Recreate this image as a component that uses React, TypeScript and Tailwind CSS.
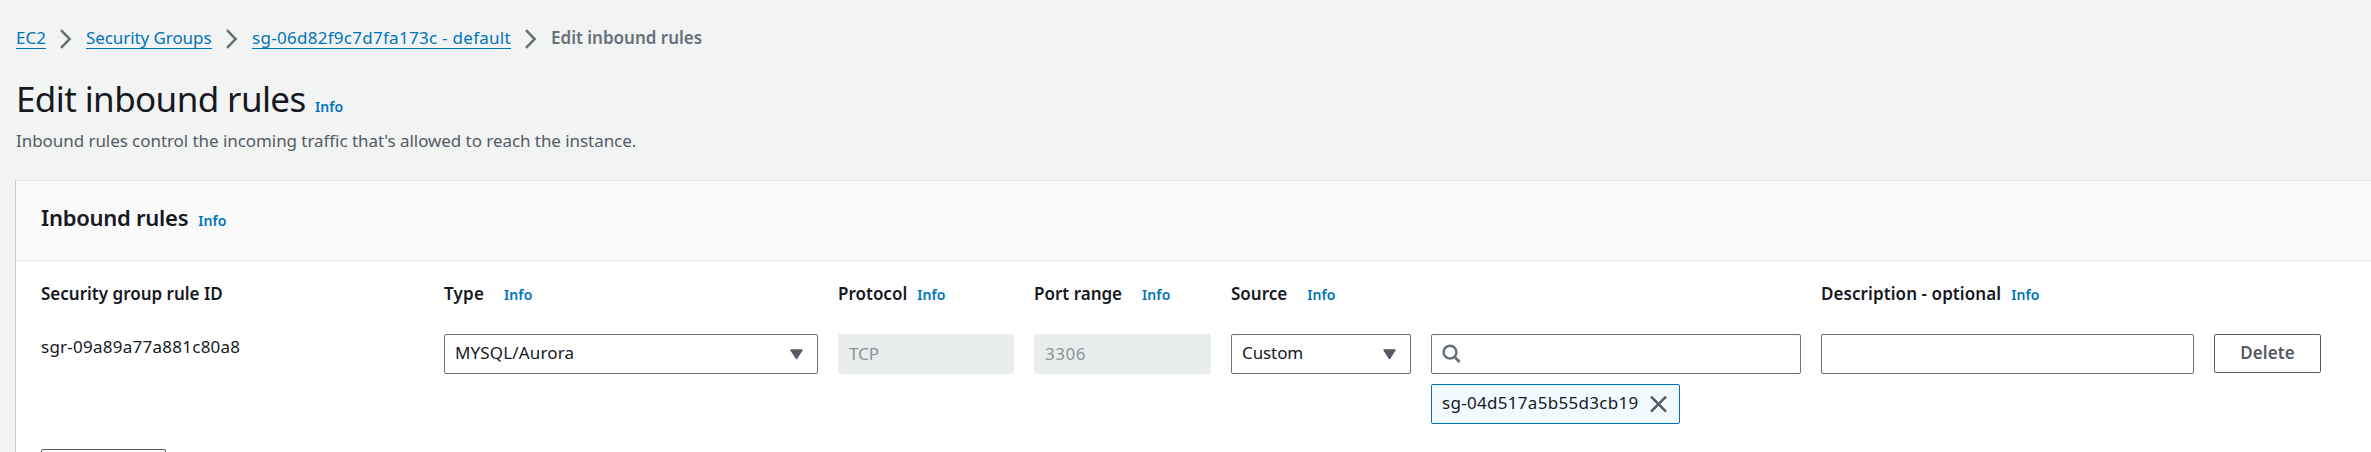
import type { ReactNode } from "react";

function Info() {
  return (
    <a className="w-[30px] whitespace-nowrap text-[14px] font-semibold leading-5 tracking-[0.1px] text-[#0073bb]">
      Info
    </a>
  );
}

function Crumb({ children, className = "" }: { children: ReactNode; className?: string }) {
  return (
    <a className={`h-6 shrink-0 whitespace-nowrap border-b border-[#0073bb] leading-[26px] text-[#0073bb] ${className}`}>
      {children}
    </a>
  );
}

function Chevron() {
  return (
    <svg className="ml-[14px] mt-1 h-5 w-3 shrink-0" viewBox="0 0 12 20" fill="none" stroke="#687078" strokeWidth="2.5">
      <path d="M1 1.2 L9.7 10 L1 18.8" />
    </svg>
  );
}

function Caret() {
  return (
    <svg className="h-[11px] w-[13px] shrink-0" viewBox="0 0 13 11">
      <path d="M1 1 H12 L6.5 9.5 Z" fill="#545b64" stroke="#545b64" strokeWidth="1.4" strokeLinejoin="round" />
    </svg>
  );
}

function Select({ children }: { children: ReactNode }) {
  return (
    <div className="flex h-10 items-center justify-between rounded-[2px] border border-[#687078] bg-white pl-[10px] pr-[14px]">
      {children}
      <Caret />
    </div>
  );
}

function Disabled({ children }: { children: ReactNode }) {
  return <div className="h-10 rounded-[2px] bg-[#eaeded] pl-[11px] pt-px leading-[38px] text-[#879596]">{children}</div>;
}

function Heading({ children, gap, spacing = "" }: { children: ReactNode; gap: string; spacing?: string }) {
  return (
    <div className={`flex h-6 items-baseline whitespace-nowrap font-semibold leading-6 ${gap}`}>
      <span className={spacing}>{children}</span>
      <Info />
    </div>
  );
}

const columns = "grid grid-cols-[383px_374px_176px_177px_180px_370px_373px_107px] gap-x-5";

export default function App() {
  return (
    <div className="h-[452px] w-[2371px] overflow-hidden bg-[#f2f3f3] font-['Noto_Sans',sans-serif] text-[17px] text-[#16191f]">
      <nav className="flex h-[49px] items-start pl-4 pt-[25px]">
        <Crumb className="w-[30px]">EC2</Crumb>
        <Chevron />
        <Crumb className="ml-[14px] w-[126px] tracking-[-0.08px]">Security Groups</Crumb>
        <Chevron />
        <Crumb className="ml-[14px] w-[259px] tracking-[0.28px]">sg-06d82f9c7d7fa173c - default</Crumb>
        <Chevron />
        <span className="ml-[14px] whitespace-nowrap font-semibold leading-[26px] text-[#687078]">Edit inbound rules</span>
      </nav>

      <header className="px-4 pt-[26px]">
        <div className="flex h-12 items-baseline">
          <h1 className="w-[299px] whitespace-nowrap text-[35px] font-normal leading-[48px] tracking-[-0.61px]">Edit inbound rules</h1>
          <Info />
        </div>
        <p className="mt-[6px] whitespace-nowrap leading-6 tracking-[-0.06px] text-[#545b64]">
          Inbound rules control the incoming traffic that&#39;s allowed to reach the instance.
        </p>
      </header>

      <main className="ml-[15px] mt-[27px] h-[272px] border-l border-t border-l-[#c3c8c8] border-t-[#e4e8e8] bg-white">
        <div className="flex h-20 items-baseline gap-[10px] border-b border-[#e4e8e8] bg-[#fafafa] pl-[25px] pt-5">
          <h2 className="whitespace-nowrap text-[22px] font-semibold leading-8 tracking-[-0.26px]">Inbound rules</h2>
          <Info />
        </div>

        <div className={`${columns} pl-[25px] pt-[21px]`}>
          <div className="whitespace-nowrap font-semibold leading-6">Security group rule ID</div>
          <Heading gap="gap-[20px]" spacing="tracking-[0.2px]">Type</Heading>
          <Heading gap="gap-[10px]">Protocol</Heading>
          <Heading gap="gap-[20px]">Port range</Heading>
          <Heading gap="gap-[20px]">Source</Heading>
          <div />
          <Heading gap="gap-[10px]" spacing="tracking-[0.08px]">Description - optional</Heading>
          <div />
        </div>

        <div className={`${columns} h-[115px] items-start pl-[25px] pt-7`}>
          <div className="whitespace-nowrap leading-[26px] tracking-[0.25px]">sgr-09a89a77a881c80a8</div>
          <Select>
            <span className="pb-[2px] leading-6 tracking-[0.15px]">MYSQL/Aurora</span>
          </Select>
          <Disabled>TCP</Disabled>
          <Disabled>
            <span className="tracking-[0.5px]">3306</span>
          </Disabled>
          <Select>
            <span className="pb-[2px] leading-6 tracking-[-0.1px]">Custom</span>
          </Select>
          <div className="flex flex-col items-start gap-[10px]">
            <div className="flex h-10 w-full items-center rounded-[2px] border border-[#687078] bg-white pl-[10px]">
              <svg className="h-5 w-5" viewBox="0 0 20 20" fill="none" stroke="#687078" strokeWidth="2.5">
                <circle cx="8" cy="8.2" r="6.4" />
                <path d="M12.4 12.8 L17.6 18" strokeWidth="2.8" />
              </svg>
            </div>
            <div className="flex h-10 w-[249px] items-center justify-between rounded-[2px] border border-[#0073bb] bg-[#f1faff] pl-[10px] pr-3">
              <span className="whitespace-nowrap pb-[2px] leading-6 tracking-[0.3px]">sg-04d517a5b55d3cb19</span>
              <svg className="h-[17px] w-[17px] shrink-0" viewBox="0 0 17 17" fill="none" stroke="#545b64" strokeWidth="2.5">
                <path d="M1 0.6 L16 15.6 M16 0.6 L1 15.6" />
              </svg>
            </div>
          </div>
          <div className="h-10 rounded-[2px] border border-[#687078] bg-white" />
          <button className="h-[39px] rounded-[2px] border border-[#545b64] bg-white pb-px font-semibold leading-9 tracking-[0.1px] text-[#545b64]">
            Delete
          </button>
        </div>

        <div className="pl-[25px] pt-7">
          <div className="h-10 w-[125px] rounded-[2px] border border-[#545b64] bg-white" />
        </div>
      </main>
    </div>
  );
}
